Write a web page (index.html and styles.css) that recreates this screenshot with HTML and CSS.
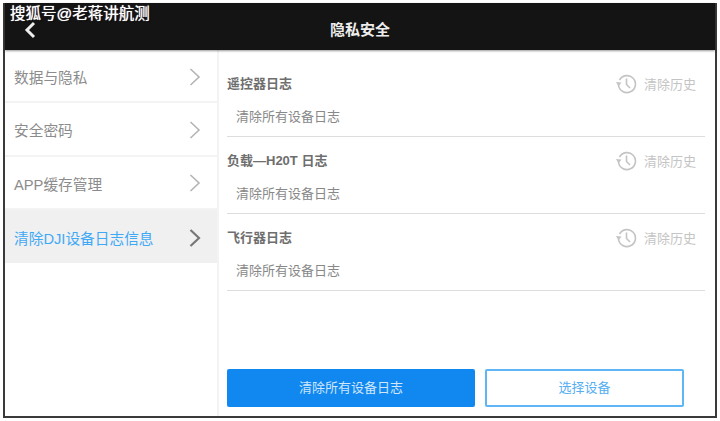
FILE: index.html
```html
<!DOCTYPE html>
<html>
<head>
    <title>隐私安全</title>
    <link rel="stylesheet" href="styles.css">
</head>
<body>
    <div class="screen">
        <div class="watermark">搜狐号@老蒋讲航测</div>
        <header class="topbar">
            <svg class="back" width="14" height="18" viewBox="0 0 14 18"><path d="M11 2 L4 9 L11 16" fill="none" stroke="#eee" stroke-width="3"/></svg>
            <span class="title">隐私安全</span>
        </header>
        <div class="main">
            <nav class="menu">
                <div class="menu-item"><span>数据与隐私</span><svg width="12" height="20" viewBox="0 0 12 20"><path d="M1.5 2 L10 10 L1.5 18" fill="none" stroke="#b4b4b4" stroke-width="1.6"/></svg></div>
                <div class="menu-item"><span>安全密码</span><svg width="12" height="20" viewBox="0 0 12 20"><path d="M1.5 2 L10 10 L1.5 18" fill="none" stroke="#b4b4b4" stroke-width="1.6"/></svg></div>
                <div class="menu-item"><span>APP缓存管理</span><svg width="12" height="20" viewBox="0 0 12 20"><path d="M1.5 2 L10 10 L1.5 18" fill="none" stroke="#b4b4b4" stroke-width="1.6"/></svg></div>
                <div class="menu-item active"><span>清除DJI设备日志信息</span><svg width="12" height="20" viewBox="0 0 12 20"><path d="M1.5 2 L10 10 L1.5 18" fill="none" stroke="#777" stroke-width="2.2"/></svg></div>
            </nav>
            <section class="content">
                <div class="logs">
                    <div class="log">
                        <div class="log-head">
                            <span class="log-name">遥控器日志</span>
                            <span class="history"><svg width="22" height="22" viewBox="0 0 22 22"><path d="M4.5 7 A8.5 8.5 0 1 1 3.5 12" fill="none" stroke="#c4c4c4" stroke-width="1.6"/><path d="M1 9 L6.5 9.5 L3.5 13.5 Z" fill="#c4c4c4"/><path d="M11.5 5.5 V11.5 L15 15" fill="none" stroke="#c4c4c4" stroke-width="1.6"/></svg>清除历史</span>
                        </div>
                        <div class="log-sub">清除所有设备日志</div>
                    </div>
                    <div class="log">
                        <div class="log-head">
                            <span class="log-name">负载—H20T 日志</span>
                            <span class="history"><svg width="22" height="22" viewBox="0 0 22 22"><path d="M4.5 7 A8.5 8.5 0 1 1 3.5 12" fill="none" stroke="#c4c4c4" stroke-width="1.6"/><path d="M1 9 L6.5 9.5 L3.5 13.5 Z" fill="#c4c4c4"/><path d="M11.5 5.5 V11.5 L15 15" fill="none" stroke="#c4c4c4" stroke-width="1.6"/></svg>清除历史</span>
                        </div>
                        <div class="log-sub">清除所有设备日志</div>
                    </div>
                    <div class="log">
                        <div class="log-head">
                            <span class="log-name">飞行器日志</span>
                            <span class="history"><svg width="22" height="22" viewBox="0 0 22 22"><path d="M4.5 7 A8.5 8.5 0 1 1 3.5 12" fill="none" stroke="#c4c4c4" stroke-width="1.6"/><path d="M1 9 L6.5 9.5 L3.5 13.5 Z" fill="#c4c4c4"/><path d="M11.5 5.5 V11.5 L15 15" fill="none" stroke="#c4c4c4" stroke-width="1.6"/></svg>清除历史</span>
                        </div>
                        <div class="log-sub">清除所有设备日志</div>
                    </div>
                </div>
                <div class="actions">
                    <button class="btn btn-primary">清除所有设备日志</button>
                    <button class="btn btn-outline">选择设备</button>
                </div>
            </section>
        </div>
    </div>
</body>
</html>
```

FILE: styles.css
```css
* {
    box-sizing: border-box;
}

body {
    margin: 0;
    width: 720px;
    height: 421px;
    overflow: hidden;
    background: #fff;
    font-family: "Liberation Sans", "Noto Sans CJK SC", sans-serif;
}

.screen {
    position: relative;
    display: flex;
    flex-direction: column;
    width: 714px;
    height: 415px;
    margin: 3px 0 0 3px;
    border: 2px solid #3a3a3a;
    border-top: none;
    background: #fff;
}

.watermark {
    position: absolute;
    z-index: 2;
    left: 5px;
    top: 1px;
    color: #fff;
    font-size: 15.5px;
    line-height: 20px;
    text-shadow: 0 0 1px #fff, 1px 1px 1px #000;
}

.topbar {
    display: flex;
    align-items: center;
    justify-content: center;
    position: relative;
    flex: none;
    height: 47px;
    background: #141414;
    box-shadow: 0 1px 2px rgba(0, 0, 0, 0.4);
}

.back {
    position: absolute;
    left: 18px;
    top: 18px;
}

.title {
    color: #eee;
    font-size: 15px;
    font-weight: bold;
    margin-top: 3px;
}

.main {
    flex: 1;
    display: flex;
    min-height: 0;
}

.menu {
    flex: none;
    width: 214px;
    border-right: 2px solid #f3f3f3;
}

.menu-item {
    display: flex;
    align-items: center;
    justify-content: space-between;
    height: 53.3px;
    padding: 2px 16px 0 9px;
    border-bottom: 2px solid #f3f3f3;
    color: #8c8c8c;
    font-size: 14.7px;
}

.menu-item.active {
    background: #f0f0f0;
    color: #3fa9f5;
    border-bottom: none;
}

.content {
    flex: 1;
    display: flex;
    flex-direction: column;
    justify-content: space-between;
    padding: 10px 10px 9px 8px;
}

.log {
    height: 77px;
    padding-top: 3px;
    border-bottom: 1px solid #ddd;
}

.log-head {
    display: flex;
    align-items: center;
    justify-content: space-between;
    height: 40px;
    padding-right: 9px;
}

.log-name {
    margin-bottom: 2px;
    color: #6e6e6e;
    font-size: 13px;
    font-weight: bold;
}

.history {
    display: flex;
    align-items: center;
    gap: 7px;
    color: #c4c4c4;
    font-size: 13px;
}

.history svg {
    margin-top: 2px;
}

.log-sub {
    padding-left: 9px;
    color: #888;
    font-size: 13px;
    line-height: 28px;
}

.actions {
    display: flex;
    gap: 10px;
}

.btn {
    width: 248px;
    height: 38px;
    padding: 0 0 3px;
    border-radius: 2px;
    font-family: inherit;
    font-size: 13px;
}

.btn-primary {
    border: none;
    background: #1188f0;
    color: #cfe6fb;
}

.btn-outline {
    width: 199px;
    border: 2px solid #5fb6f7;
    background: #fff;
    color: #55aef2;
}
```
